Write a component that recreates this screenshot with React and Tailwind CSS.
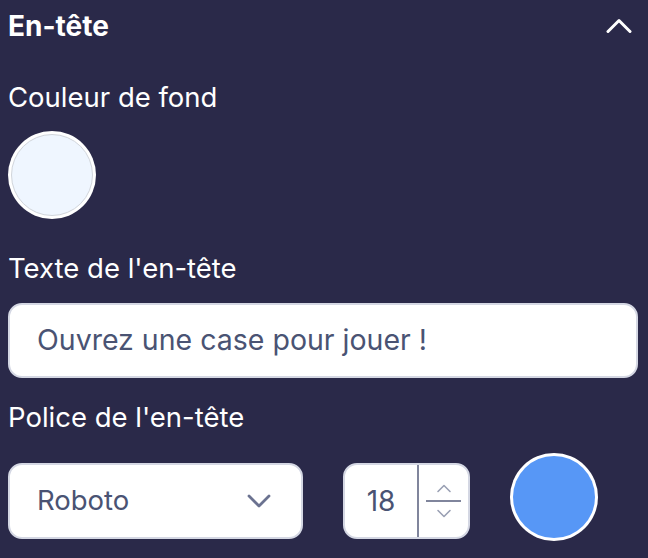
import React from 'react';

export default function App() {
  return (
    <div className="w-[648px] h-[558px] bg-[#2a2949] px-2 overflow-hidden" style={{ fontFamily: 'Inter, "Noto Sans", sans-serif' }}>
      <div className="h-[52px] flex items-center justify-between">
        <h2 className="text-[28px] font-bold text-white">En-tête</h2>
        <svg className="w-[26px] h-[16px] mr-[8px]" viewBox="0 0 26 16" fill="none" stroke="white" strokeWidth="3" strokeLinecap="round" strokeLinejoin="round">
          <path d="M2 13.5L13 2.5L24 13.5" />
        </svg>
      </div>

      <div className="mt-[29px] text-[27.5px] leading-8 text-white">Couleur de fond</div>
      <div className="mt-[18px] w-[88px] h-[88px] rounded-full bg-white p-[3px]">
        <div className="w-full h-full rounded-full bg-[#eff6ff] border border-[#d1d5db]"></div>
      </div>

      <div className="mt-[33px] text-[27.5px] leading-8 text-white">Texte de l'en-tête</div>
      <div className="mt-[19px] h-[75px] w-[630px] rounded-[14px] bg-white border-2 border-[#d4d7e3] flex items-center px-[27px]">
        <span className="text-[28.5px] text-[#4a5373]">Ouvrez une case pour jouer !</span>
      </div>

      <div className="mt-[23px] text-[27.5px] leading-8 text-white">Police de l'en-tête</div>
      <div className="mt-[20px] flex items-center h-[88px]">
        <div className="mt-[8px] w-[295px] h-[76px] rounded-[14px] bg-white border-2 border-[#d4d7e3] flex items-center justify-between pl-[27px] pr-[30px]">
          <span className="text-[27.5px] text-[#4a5373]">Roboto</span>
          <svg className="w-[24px] h-[14px]" viewBox="0 0 24 14" fill="none" stroke="#6b7290" strokeWidth="2.8" strokeLinecap="round" strokeLinejoin="round">
            <path d="M2 2l10 10 10-10" />
          </svg>
        </div>
        <div className="ml-[40px] mt-[8px] w-[127px] h-[76px] rounded-[14px] bg-white border-2 border-[#d4d7e3] flex">
          <div className="w-[72px] flex items-center justify-center text-[28px] text-[#4a5373]">18</div>
          <div className="w-[2px] bg-[#80859c]"></div>
          <div className="flex-1 flex flex-col items-center justify-center">
            <svg className="w-5 h-4" viewBox="0 0 20 16" fill="none" stroke="#9aa0b4" strokeWidth="1.6" strokeLinecap="round" strokeLinejoin="round">
              <path d="M4 10.5l6-6 6 6" />
            </svg>
            <div className="w-[35px] h-[2px] bg-[#80859c] my-[3px]"></div>
            <svg className="w-5 h-4" viewBox="0 0 20 16" fill="none" stroke="#9aa0b4" strokeWidth="1.6" strokeLinecap="round" strokeLinejoin="round">
              <path d="M4 5.5l6 6 6-6" />
            </svg>
          </div>
        </div>
        <div className="ml-[40px] w-[88px] h-[88px] rounded-full bg-white p-[3px]">
          <div className="w-full h-full rounded-full bg-[#5797f6]"></div>
        </div>
      </div>
    </div>
  );
}
